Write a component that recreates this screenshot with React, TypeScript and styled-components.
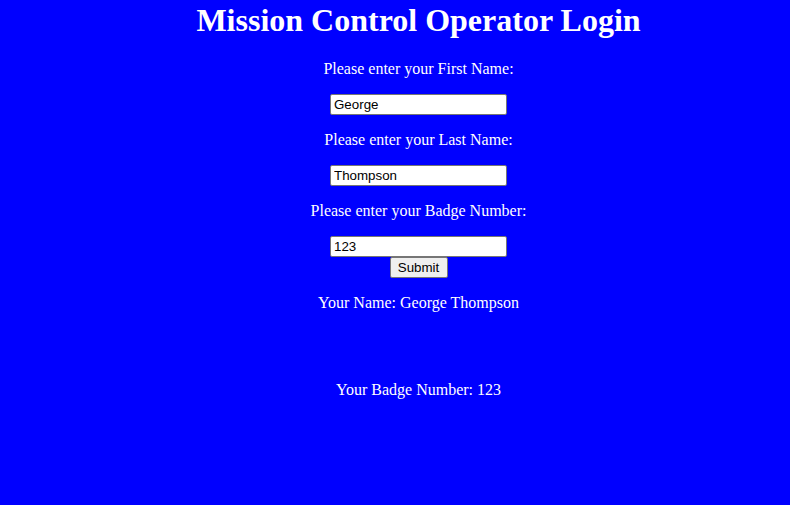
import React, { useState } from "react";
import styled, { createGlobalStyle } from "styled-components";

const GlobalStyle = createGlobalStyle`
  html, body {
    margin: 0;
    padding: 0;
    background: #0000ff;
    min-height: 100%;
  }
  body {
    min-height: 505px;
  }
`;

const Page = styled.main`
  box-sizing: border-box;
  width: 100%;
  min-height: 505px;
  padding-left: 47px;
  background: #0000ff;
  color: #ffffff;
  font-family: "Liberation Serif", "Times New Roman", serif;
  text-align: center;
  overflow: hidden;
`;

const Title = styled.h1`
  margin: 2px 0 21px;
  font-size: 32px;
  font-weight: bold;
  line-height: normal;
`;

const Form = styled.form`
  margin: 0;
`;

const Label = styled.p`
  margin: 16px 0;
  font-size: 16px;
  line-height: normal;
`;

const Field = styled.input`
  display: block;
  margin: 0 auto;
  box-sizing: border-box;
  width: 177px;
  height: 21px;
  padding: 1px 3px;
  border: 1px solid #767676;
  border-radius: 2px;
  background: #ffffff;
  color: #000000;
  font-family: "Liberation Sans", Arial, sans-serif;
  font-size: 13.333px;
`;

const SubmitButton = styled.button`
  display: block;
  margin: 0 auto;
  box-sizing: border-box;
  width: 58px;
  height: 21px;
  padding: 1px 6px;
  border: 1px solid #767676;
  border-radius: 2px;
  background: #efefef;
  color: #000000;
  font-family: "Liberation Sans", Arial, sans-serif;
  font-size: 13.333px;
`;

const Output = styled.p<{ $gap?: number }>`
  margin: ${(p) => p.$gap ?? 16}px 0 16px;
  font-size: 16px;
  line-height: normal;
`;

export default function App() {
  const [first, setFirst] = useState("George");
  const [last, setLast] = useState("Thompson");
  const [badge, setBadge] = useState("123");

  return (
    <>
      <GlobalStyle />
      <Page>
        <Title>Mission Control Operator Login</Title>
        <Form onSubmit={(e) => e.preventDefault()}>
          <Label>Please enter your First Name:</Label>
          <Field value={first} onChange={(e) => setFirst(e.target.value)} />
          <Label>Please enter your Last Name:</Label>
          <Field value={last} onChange={(e) => setLast(e.target.value)} />
          <Label>Please enter your Badge Number:</Label>
          <Field value={badge} onChange={(e) => setBadge(e.target.value)} />
          <SubmitButton type="submit">Submit</SubmitButton>
        </Form>
        <Output>
          Your Name: {first} {last}
        </Output>
        <Output $gap={69}>Your Badge Number: {badge}</Output>
      </Page>
    </>
  );
}
